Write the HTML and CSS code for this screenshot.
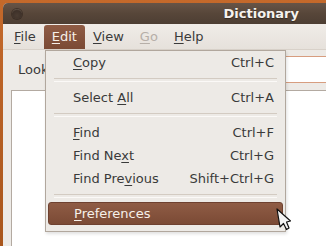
FILE: index.html
```html
<!DOCTYPE html>
<html>
<head>
    <title>Dictionary</title>
    <link rel="stylesheet" href="styles.css">
</head>
<body>
    <div class="window">
        <div class="titlebar">
            <span class="close-dot"></span>
            <span class="title">Dictionary</span>
        </div>
        <div class="menubar">
            <span class="menubar-item"><u>F</u>ile</span>
            <span class="menubar-item active"><u>E</u>dit</span>
            <span class="menubar-item"><u>V</u>iew</span>
            <span class="menubar-item disabled"><u>G</u>o</span>
            <span class="menubar-item"><u>H</u>elp</span>
        </div>
        <div class="content">
            <div class="lookup-row">
                <label class="lookup-label">Look up:</label>
                <div class="lookup-entry"></div>
            </div>
            <div class="results"></div>
        </div>

        <div class="menu">
            <div class="menu-item"><span><u>C</u>opy</span><span>Ctrl+C</span></div>
            <div class="menu-sep"></div>
            <div class="menu-item"><span>Select <u>A</u>ll</span><span>Ctrl+A</span></div>
            <div class="menu-sep"></div>
            <div class="menu-item"><span><u>F</u>ind</span><span>Ctrl+F</span></div>
            <div class="menu-item"><span>Find Ne<u>x</u>t</span><span>Ctrl+G</span></div>
            <div class="menu-item"><span>Find Pre<u>v</u>ious</span><span>Shift+Ctrl+G</span></div>
            <div class="menu-sep"></div>
            <div class="menu-item selected"><span><u>P</u>references</span><span></span></div>
        </div>

        <svg class="cursor" width="16" height="24" viewBox="0 0 16 24">
            <path d="M1 1 L4 19 L7.5 15.5 L10.5 21.5 L13 20 L10.5 14 L14.5 13 Z" fill="#f4f4f4" stroke="#111" stroke-width="1.2" stroke-linejoin="round"/>
        </svg>
    </div>
</body>
</html>
```

FILE: styles.css
```css
:root {
    --desktop: #a9561c;
    --window-bg: #edeae6;
    --text: #3a3a3a;
    --highlight-top: #8f5c45;
    --highlight-bottom: #7b4a35;
    --font: "DejaVu Sans", "Liberation Sans", sans-serif;
}

* { box-sizing: border-box; margin: 0; padding: 0; }

body {
    width: 326px;
    height: 246px;
    overflow: hidden;
    background: linear-gradient(180deg, #c4692b 0%, var(--desktop) 100%);
    font-family: var(--font);
    font-size: 13px;
    color: var(--text);
}

u {
    text-decoration: underline;
    text-underline-offset: 2px;
}

.window {
    position: relative;
    margin: 3px 0 0 3px;
    height: 243px;
    background: var(--window-bg);
    border-radius: 5px 0 0 0;
    overflow: hidden;
}

.titlebar {
    height: 21px;
    display: flex;
    align-items: center;
    justify-content: space-between;
    padding: 0 27px 0 9px;
    background: linear-gradient(180deg, #675447 0%, #574639 50%, #4d3e33 100%);
}

.close-dot {
    width: 10px;
    height: 10px;
    border-radius: 50%;
    background: radial-gradient(circle at 50% 65%, #4a3c32 0%, #3e3129 60%, #8a7a6c 100%);
    box-shadow: 0 0 0 1px rgba(40, 30, 24, 0.5);
}

.title {
    font-weight: bold;
    color: #f6f2ee;
    text-shadow: 0 1px 1px rgba(0, 0, 0, 0.4);
}

.menubar {
    height: 26px;
    display: flex;
    align-items: flex-end;
    padding-left: 3px;
    background: linear-gradient(180deg, #f0ece8 0%, #e6e1db 100%);
    border-bottom: 1px solid #d8d1c9;
}

.menubar-item {
    height: 24px;
    line-height: 23px;
    padding: 0 8px;
    border-radius: 3px 3px 0 0;
}

.menubar-item.active {
    background: linear-gradient(180deg, var(--highlight-top) 0%, var(--highlight-bottom) 100%);
    color: #f6f0ea;
}

.menubar-item.disabled {
    color: #b6afa8;
}

.content {
    padding: 6px 0 0 8px;
    margin-right: -12px;
}

.lookup-row {
    display: flex;
    align-items: center;
    gap: 8px;
    height: 27px;
    padding-left: 7px;
}

.lookup-entry {
    flex: 1;
    height: 27px;
    background: #fff;
    border: 1px solid #d79d7f;
    border-radius: 2px;
}

.results {
    margin-top: 7px;
    height: 160px;
    background: #fff;
    border-left: 1px solid #b3aaa1;
    border-top: 1px solid #b3aaa1;
}

.menu {
    position: absolute;
    left: 42px;
    top: 47px;
    width: 241px;
    padding: 0 2px 6px 2px;
    background: var(--window-bg);
    border: 1px solid #b1a79d;
    box-shadow: 1px 2px 3px rgba(0, 0, 0, 0.12);
}

.menu-item {
    display: flex;
    justify-content: space-between;
    align-items: center;
    height: 23px;
    padding: 0 9px 0 25px;
}

.menu-item.selected {
    border-radius: 3px;
    background: linear-gradient(180deg, var(--highlight-top) 0%, var(--highlight-bottom) 100%);
    color: #f6f0ea;
    border: 1px solid #6e4130;
}

.menu-sep {
    height: 12px;
    margin: 0 6px;
    display: flex;
    align-items: center;
}

.menu-sep::before {
    content: "";
    flex: 1;
    height: 2px;
    border-top: 1px solid #d3cbc2;
    border-bottom: 1px solid #fbf9f7;
}

.cursor {
    position: absolute;
    left: 273px;
    top: 205px;
}
```
